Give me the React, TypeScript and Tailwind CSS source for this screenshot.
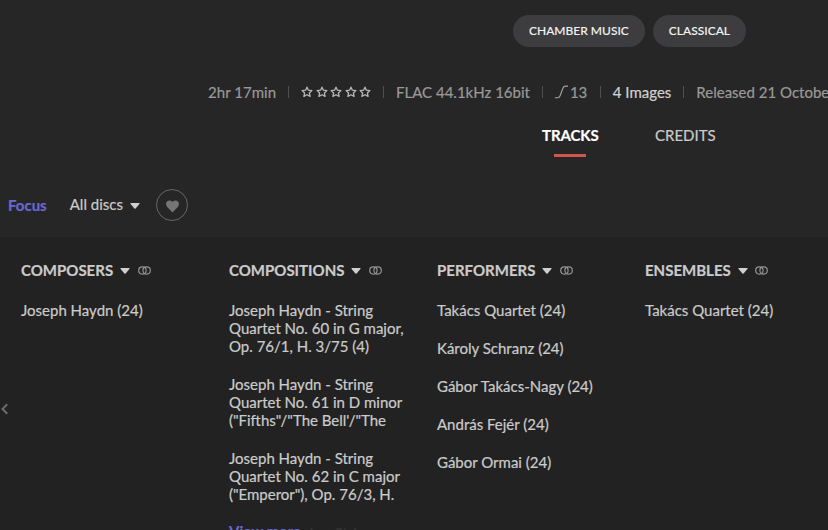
import React from 'react';

type Column = {
  title: string;
  items: string[];
  more?: boolean;
};

const tags = ['CHAMBER MUSIC', 'CLASSICAL'];

const columns: Column[] = [
  { title: 'COMPOSERS', items: ['Joseph Haydn (24)'] },
  {
    title: 'COMPOSITIONS',
    items: [
      'Joseph Haydn - String Quartet No. 60 in G major, Op. 76/1, H. 3/75 (4)',
      'Joseph Haydn - String Quartet No. 61 in D minor ("Fifths"/"The Bell\'/"The',
      'Joseph Haydn - String Quartet No. 62 in C major ("Emperor"), Op. 76/3, H.',
    ],
    more: true,
  },
  {
    title: 'PERFORMERS',
    items: [
      'Takács Quartet (24)',
      'Károly Schranz (24)',
      'Gábor Takács-Nagy (24)',
      'András Fejér (24)',
      'Gábor Ormai (24)',
    ],
  },
  { title: 'ENSEMBLES', items: ['Takács Quartet (24)'] },
];

const Caret = () => (
  <svg className="h-[6px] w-[10px] shrink-0" viewBox="0 0 10 6" fill="#d0d0d0">
    <path d="M1 0h8q1 .2.4 1L5.6 5.5q-.6.6-1.2 0L.6 1Q0 .2 1 0z" />
  </svg>
);

const Rings = () => (
  <svg className="h-[9px] w-[13px] shrink-0" viewBox="0 0 13 9" fill="none" stroke="#929292" strokeWidth="1.2">
    <rect x="0.7" y="0.9" width="7.4" height="7.2" rx="3.5" />
    <rect x="4.9" y="0.9" width="7.4" height="7.2" rx="3.5" />
  </svg>
);

const Star = () => (
  <svg className="h-[12px] w-[12px]" viewBox="0 0 12 12" fill="none" stroke="#b8b8b8" strokeWidth="1.3" strokeLinejoin="round">
    <path d="M6 1.2l1.4 3 3.5.4-2.5 2.3.7 3.5L6 8.7l-3.1 1.7.7-3.5L1.1 4.6l3.5-.4z" />
  </svg>
);

const Divider = () => <span className="h-[12px] w-px shrink-0 bg-[#4e4e4e]" />;

const App: React.FC = () => {
  return (
    <div className="flex h-[530px] w-[828px] flex-col overflow-hidden bg-[#262626] font-['Lato',sans-serif] text-[15px] leading-[18px] text-[#cbcbcb] [-webkit-text-stroke:0.2px]">
      <div className="flex shrink-0 gap-2 pt-[15px] pl-[513px]">
        {tags.map((tag) => (
          <span key={tag} className="flex h-8 items-center rounded-full bg-[#3d3d3f] px-4 text-[12px] font-medium text-[#f2f2f2] [-webkit-text-stroke:0.1px]">
            {tag}
          </span>
        ))}
      </div>

      <div className="mt-[35px] flex h-5 shrink-0 items-center gap-3 pl-[208px] whitespace-nowrap text-[#999999]">
        <span className="w-[69.3px] tracking-[0.03px]">2hr 17min</span>
        <Divider />
        <div className="flex gap-[2.5px]">
          {[1, 2, 3, 4, 5].map((n) => (
            <Star key={n} />
          ))}
        </div>
        <Divider />
        <span>FLAC 44.1kHz 16bit</span>
        <Divider />
        <span className="flex items-center gap-[2px] pr-[0.5px]">
          <svg className="h-[14px] w-[13px]" viewBox="0 0 13 14" fill="none" stroke="#a4a4a4" strokeWidth="1.1">
            <path d="M0 12.8h2.5Q4.3 12.8 5 11L8 3Q8.8 1.1 10.5 1.1H13" />
          </svg>
          13
        </span>
        <Divider />
        <span className="text-[#d0d0d0]">4 Images</span>
        <Divider />
        <span>Released 21 October 2022</span>
      </div>

      <div className="mt-[24px] flex h-[30px] shrink-0 pl-[542px]">
        <div className="flex w-[113px] flex-col items-start font-bold text-white">
          <span className="tracking-[-0.1px]">TRACKS</span>
          <span className="mt-[10px] ml-[12px] h-[3px] w-8 shrink-0 bg-[#d2574b]" />
        </div>
        <span>CREDITS</span>
      </div>

      <div className="mt-[33px] flex h-8 shrink-0 items-center pl-2">
        <span className="-mt-px font-bold text-[#6a68d4]">Focus</span>
        <span className="-mt-[2px] ml-[23px]">All discs</span>
        <span className="ml-[7.5px] pt-[2px]">
          <Caret />
        </span>
        <span className="ml-[15.5px] flex h-8 w-8 items-center justify-center rounded-full border border-[#666666]">
          <svg className="mt-[2px] ml-px h-[13px] w-[13px]" viewBox="0 0 13 13" fill="#757575">
            <path d="M6.5 12.6L1.2 7Q-.2 5.3.1 3.2C.7.1 4.6-.5 6.5 2c1.9-2.5 5.8-1.9 6.4 1.2.3 2.1-1.1 3.8-1.1 3.8z" />
          </svg>
        </span>
      </div>

      <div className="mt-[16px] flex flex-1 overflow-hidden bg-[#222222]">
        <div className="flex w-[21px] shrink-0 pt-[166px]">
          <svg className="h-[12px] w-[9px]" viewBox="0 0 9 12" fill="none" stroke="#6b6b6b" strokeWidth="2">
            <path d="M7.2 1.2L2.5 6l4.7 4.8" />
          </svg>
        </div>
        {columns.map((col) => (
          <div key={col.title} className="w-[208px] shrink-0 pt-[24px] pr-[28px]">
            <div className="flex items-center font-bold">
              <h2>{col.title}</h2>
              <span className="mt-[2px] ml-[7px]">
                <Caret />
              </span>
              <span className="ml-[7.5px]">
                <Rings />
              </span>
            </div>
            <ul className="mt-[22px] flex flex-col gap-5">
              {col.items.map((item) => (
                <li key={item}>{item}</li>
              ))}
            </ul>
            {col.more && (
              <div className="relative mt-[19px] whitespace-nowrap">
                <span className="absolute top-[2px] left-0 text-[#353535]">Joseph Haydn - String</span>
                <a className="relative bg-[#222222] font-bold text-[#6a68d4]">View more</a>
              </div>
            )}
          </div>
        ))}
      </div>
    </div>
  );
};

export default App;
